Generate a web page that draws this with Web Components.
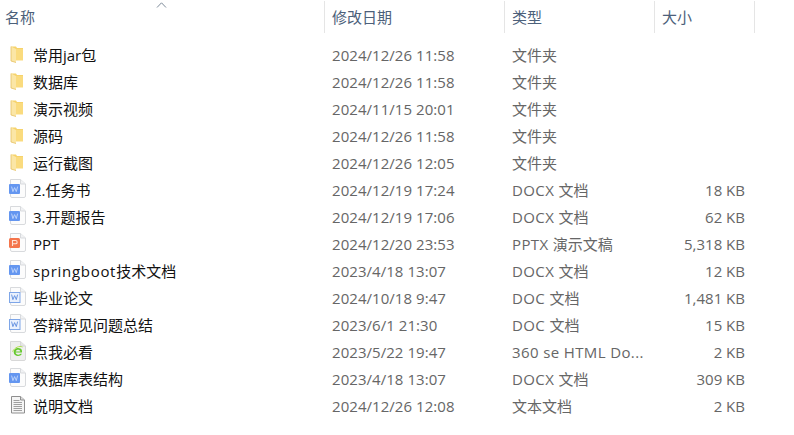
<!DOCTYPE html>
<html lang="zh-CN">
<head>
<meta charset="UTF-8">
<title>文件列表</title>
<style>
  html, body { margin: 0; background: #fff; }
  body { font-family: "Open Sans", "Noto Sans CJK SC", sans-serif; font-size: 15px; overflow: hidden; }
</style>
</head>
<body>

<template id="file-list-template">
  <style>
    :host { display: block; width: 794px; height: 435px; background: #fff; }
    .rows { display: flex; flex-direction: column; padding-top: 9px; }
  </style>
  <file-header></file-header>
  <div class="rows"><slot></slot></div>
</template>

<template id="file-header-template">
  <style>
    :host {
      display: grid; grid-template-columns: 325px 180px 150px 100px 1px;
      height: 33px; color: #4c607a; position: relative;
    }
    .col { padding: 0 0 2px 7px; border-right: 1px solid #e5e5e5; display: flex; align-items: center; margin-top: 1px; box-sizing: border-box; }
    .col:first-of-type { padding-left: 5px; }
    svg { position: absolute; left: 156px; top: 2px; }
  </style>
  <div class="col">名称</div>
  <div class="col">修改日期</div>
  <div class="col">类型</div>
  <div class="col">大小</div>
  <svg width="11" height="6" viewBox="0 0 11 6"><path d="M1 5.5 5.5.8l4.5 4.7" fill="none" stroke="#7d8a99" stroke-width="1"/></svg>
</template>

<template id="file-row-template">
  <style>
    :host {
      display: grid; grid-template-columns: 325px 180px 150px 90px;
      height: 27px; align-items: center; color: #666; line-height: 27px;
    }
    .name { display: flex; align-items: center; color: #111; padding-left: 9px; gap: 7px; white-space: nowrap; }
    file-icon { margin-top: -4px; }
    .date { padding-left: 7px; letter-spacing: .05px; }
    .type { padding-left: 7px; white-space: nowrap; }
    .lat { letter-spacing: .38px; }
    .size { text-align: right; }
  </style>
  <div class="name"><file-icon></file-icon><span><slot></slot></span></div>
  <div class="date"></div>
  <div class="type"></div>
  <div class="size"></div>
</template>

<script>
  // Icon drawings, keyed by the row's icon attribute
  function sheet(inner) {
    return `<svg width="17" height="19" viewBox="0 0 17 19">
      <path d="M1.5.5h10l5 4.5v12a1.5 1.5 0 0 1-1.5 1.5h-12a1.5 1.5 0 0 1-1.5-1.5z" fill="#fcfcfc" stroke="#d8dadd"/>
      <path d="M11.5.5v4.5h5" fill="#f1f2f4" stroke="#d8dadd"/>${inner}</svg>`;
  }
  const wordMark = (colour) => `<path d="M2.6 7.6l1.3 5 1.7-4 1.7 4 1.3-5" fill="none" stroke="${colour}" stroke-width=".9"/>`;

  const ICONS = {
    folder: `<svg width="17" height="19" viewBox="0 -1 17 19">
      <path d="M2 1.5h5l1 1.5h6v12H6z" fill="#f6d36c"/>
      <path d="M2 1.5l5 2.5v13.5L2 16z" fill="#fbe6a6"/>
      <path d="M7 4h7v11.5H7z" fill="#fadb7e"/>
      <path d="M2 1.5V16l5 1.5" fill="none" stroke="#e6c063" stroke-width=".8"/></svg>`,
    docx: sheet(`<rect x="0" y="5" width="11" height="10" rx="1" fill="#6496f0"/>${wordMark('#c4d8fa')}`),
    doc: sheet(`<rect x=".5" y="5.5" width="10.5" height="10" fill="#eaf1fd" stroke="#7ea6e8"/>${wordMark('#5a8ade')}`),
    ppt: sheet(`<rect x="0" y="5" width="11" height="10" rx="1.5" fill="#f4754c"/>
      <path d="M3.5 13V7.5h3a1.6 1.6 0 0 1 0 3.3h-3" fill="none" stroke="#fde3d8" stroke-width="1.1"/>`),
    html: `<svg width="17" height="20" viewBox="0 0 17 20">
      <path d="M1.5.5h10l5 4.5v13a1.5 1.5 0 0 1-1.5 1.5h-12a1.5 1.5 0 0 1-1.5-1.5z" fill="#efefef" stroke="#d8d8d8"/>
      <path d="M11.5.5v4.5h5" fill="#e6e6e6" stroke="#d8d8d8"/>
      <path d="M13 11.6H6.6c.2 2.4 3.4 2.8 4.8 1.1h1.5c-1.6 3.4-7.9 3-8.2-1.5-.1-3.5 4-5.2 6.8-3.6 1.4.8 1.7 2.1 1.5 4zM6.7 10.4h4.6c0-2.2-4.2-2.4-4.6 0z" fill="#66c92f"/>
      <path d="M13.5 6c-3-1.4-7.6.2-10 4.6" fill="none" stroke="#a8dc3c" stroke-width=".9"/></svg>`,
    txt: `<svg width="17" height="19" viewBox="0 -1 17 19">
      <path d="M2.5.5h9l4 3.5v13h-13z" fill="#f5f5f5" stroke="#8f8f8f"/>
      <path d="M11.5.5V4h4" fill="#ddd" stroke="#8f8f8f"/>
      <path d="M4.5 4.5h6M4.5 6.5h8.5M4.5 8.5h8.5M4.5 10.5h8.5M4.5 12.5h8.5M4.5 14.5h8.5" stroke="#a0a0a0"/></svg>`
  };

  class FileIcon extends HTMLElement {
    connectedCallback() {
      if (!this.shadowRoot) this.attachShadow({ mode: 'open' });
      const kind = this.getAttribute('kind') || 'txt';
      this.shadowRoot.innerHTML = `<style>:host{display:block;width:17px;height:19px;line-height:0}</style>${ICONS[kind]}`;
    }
  }

  class FileHeader extends HTMLElement {
    constructor() {
      super();
      this.attachShadow({ mode: 'open' });
      this.shadowRoot.appendChild(document.getElementById('file-header-template').content.cloneNode(true));
    }
  }

  class FileRow extends HTMLElement {
    constructor() {
      super();
      this.attachShadow({ mode: 'open' });
      this.shadowRoot.appendChild(document.getElementById('file-row-template').content.cloneNode(true));
    }
    connectedCallback() {
      const root = this.shadowRoot;
      root.querySelector('file-icon').setAttribute('kind', this.getAttribute('icon'));
      root.querySelector('.date').textContent = this.getAttribute('date');
      // latin part of the type is wider in the reference than the font gives
      const type = root.querySelector('.type');
      (this.getAttribute('type').match(/[\x20-\x7e]+|[^\x20-\x7e]+/g) || []).forEach((part) => {
        const span = document.createElement('span');
        span.textContent = part;
        if (/^[\x20-\x7e]/.test(part)) span.className = 'lat';
        type.appendChild(span);
      });
      root.querySelector('.size').textContent = this.getAttribute('size') || '';
    }
  }

  class FileList extends HTMLElement {
    constructor() {
      super();
      this.attachShadow({ mode: 'open' });
      this.shadowRoot.appendChild(document.getElementById('file-list-template').content.cloneNode(true));
    }
  }

  customElements.define('file-icon', FileIcon);
  customElements.define('file-header', FileHeader);
  customElements.define('file-row', FileRow);
  customElements.define('file-list', FileList);
</script>

<file-list>
  <file-row icon="folder" date="2024/12/26 11:58" type="文件夹">常用jar包</file-row>
  <file-row icon="folder" date="2024/12/26 11:58" type="文件夹">数据库</file-row>
  <file-row icon="folder" date="2024/11/15 20:01" type="文件夹">演示视频</file-row>
  <file-row icon="folder" date="2024/12/26 11:58" type="文件夹">源码</file-row>
  <file-row icon="folder" date="2024/12/26 12:05" type="文件夹">运行截图</file-row>
  <file-row icon="docx" date="2024/12/19 17:24" type="DOCX 文档" size="18 KB">2.任务书</file-row>
  <file-row icon="docx" date="2024/12/19 17:06" type="DOCX 文档" size="62 KB">3.开题报告</file-row>
  <file-row icon="ppt" date="2024/12/20 23:53" type="PPTX 演示文稿" size="5,318 KB">PPT</file-row>
  <file-row icon="docx" date="2023/4/18 13:07" type="DOCX 文档" size="12 KB"><span style="letter-spacing:.7px">springboot</span>技术文档</file-row>
  <file-row icon="doc" date="2024/10/18 9:47" type="DOC 文档" size="1,481 KB">毕业论文</file-row>
  <file-row icon="doc" date="2023/6/1 21:30" type="DOC 文档" size="15 KB">答辩常见问题总结</file-row>
  <file-row icon="html" date="2023/5/22 19:47" type="360 se HTML Do..." size="2 KB">点我必看</file-row>
  <file-row icon="docx" date="2023/4/18 13:07" type="DOCX 文档" size="309 KB">数据库表结构</file-row>
  <file-row icon="txt" date="2024/12/26 12:08" type="文本文档" size="2 KB">说明文档</file-row>
</file-list>

</body>
</html>
